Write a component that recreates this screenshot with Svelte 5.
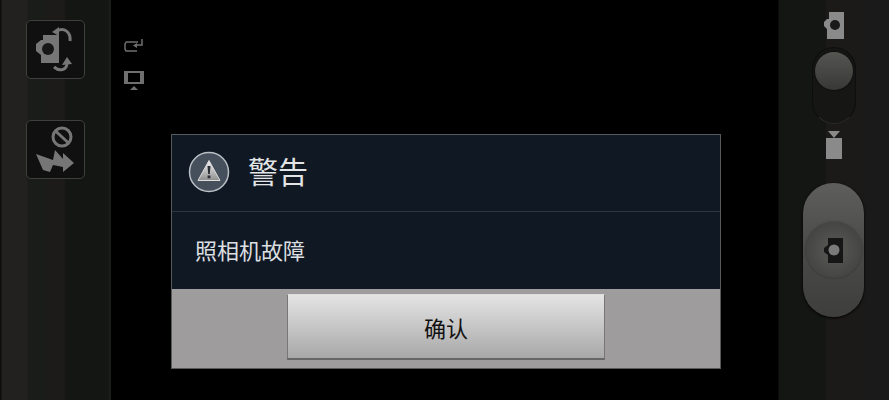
<script>
  const title = '警告';
  const message = '照相机故障';
  const confirmLabel = '确认';
</script>

<div class="screen">
  <aside class="rail left">
    <button class="tool" aria-label="switch camera">
      <svg width="57" height="57" viewBox="1 1 57 57">
        <path d="M17 15h16v28H15v-8l-5-4v-7l5-4h2z" fill="#767676" />
        <circle cx="22" cy="29" r="6" fill="#161716" />
        <path d="M31 11c7-4 14 1 13 10" fill="none" stroke="#767676" stroke-width="3" />
        <path d="M26 12l7-5v9z" fill="#767676" />
        <path d="M28 47c6 5 12 3 13-3" fill="none" stroke="#767676" stroke-width="3" />
        <path d="M36 45l5-8 5 7z" fill="#767676" />
      </svg>
    </button>
    <button class="tool" aria-label="flash off">
      <svg width="57" height="57" viewBox="1 1 57 57">
        <circle cx="36" cy="17" r="9" fill="none" stroke="#767676" stroke-width="3" />
        <path d="M29.500 11l13 12" stroke="#767676" stroke-width="3" />
        <path d="M10 34l17 6 2-10 8 9v-6l11 10-11 9v-5l-10-2-3 7-7-2z" fill="#767676" />
      </svg>
    </button>
  </aside>

  <main class="preview">
    <div class="status">
      <svg width="22" height="14" viewBox="0 0 22 14">
        <path d="M3 3h12M3 3l-1 2v5l1 2h11M19 0v6h-5" fill="none" stroke="#6f6f6f" stroke-width="1.500" />
        <path d="M14 4v5l-4-2.500z" fill="#6f6f6f" />
      </svg>
      <svg width="22" height="20" viewBox="0 0 22 20">
        <path fill-rule="evenodd" d="M1 0h20v13H1zM5 2v9h12V2z" fill="#6f6f6f" />
        <path d="M7 19l4-4 4 4z" fill="#6f6f6f" />
      </svg>
    </div>

    <div class="overlay">
      <div class="dialog">
        <header class="dialog-title">
          <span class="alert-icon">
            <svg width="42" height="42" viewBox="0 0 42 42">
              <defs>
                <linearGradient id="tri" x1="0" y1="0" x2="0" y2="1">
                  <stop offset="0" stop-color="#f2f2f2" />
                  <stop offset="1" stop-color="#8f8f8f" />
                </linearGradient>
              </defs>
              <circle cx="21" cy="21" r="19.500" fill="#45505c" stroke="#b9bfc4" stroke-width="1.500" />
              <path d="M21 9.500l11 20H10z" fill="url(#tri)" stroke="#ddd" stroke-linejoin="round" />
              <path d="M19.500 15h3l-.7 8h-1.600zM19.600 24.500h2.800v2.800h-2.800z" fill="#2a2f35" />
            </svg>
          </span>
          <h1>{title}</h1>
        </header>
        <p class="dialog-body">{message}</p>
        <footer class="dialog-actions">
          <button class="confirm">{confirmLabel}</button>
        </footer>
      </div>
    </div>
  </main>

  <aside class="rail right">
    <svg class="mode-icon" width="20" height="27" viewBox="0 0 20 27">
      <path d="M5 0h15v27H3V17L0 14v-4l3-3h2z" fill="#8a8a8a" />
      <circle cx="11" cy="13" r="5" fill="#191a19" />
    </svg>
    <div class="switch">
      <span class="knob"></span>
    </div>
    <svg class="mode-icon" width="16" height="28" viewBox="0 0 16 28">
      <path d="M2 0h12l-6 7z" fill="#8a8a8a" />
      <path d="M0 7h16v21H0z" fill="#8a8a8a" />
    </svg>
    <button class="shutter" aria-label="take picture">
      <span class="shutter-ring">
        <svg width="19" height="25" viewBox="0 0 19 25">
          <path d="M4 0h15v25H4v-8L0 14v-4l4-3z" fill="#161616" />
          <circle cx="10" cy="12" r="5.500" fill="#7a7a7a" />
        </svg>
      </span>
    </button>
  </aside>
</div>

<style>
  :global(body) {
    margin: 0;
    background: #000;
  }

  .screen {
    display: flex;
    width: 889px;
    height: 400px;
    overflow: hidden;
    background: #000;
    font-family: "Noto Sans CJK SC", "Liberation Sans", sans-serif;
  }

  .rail {
    flex: none;
    display: flex;
    flex-direction: column;
    align-items: center;
    width: 111px;
    box-sizing: border-box;
  }

  .left {
    gap: 41px;
    padding-top: 20px;
    background: linear-gradient(to right,
      #0c0c0c 0, #0c0c0c 1px,
      #232120 2px, #232120 27px,
      #191c19 28px, #191c19 46px,
      #1d1b19 47px, #1d1b19 64px,
      #141614 66px, #141614 108px,
      #191c19 109px, #191c19 111px);
  }

  .tool {
    display: flex;
    align-items: center;
    justify-content: center;
    width: 59px;
    height: 59px;
    padding: 0;
    border: 1px solid #3f403e;
    border-radius: 5px;
    background: #0f100f;
    box-sizing: border-box;
  }

  .preview {
    flex: 1;
    position: relative;
    min-width: 0;
  }

  .status {
    display: flex;
    flex-direction: column;
    align-items: flex-start;
    gap: 18px;
    padding: 39px 0 0 12px;
  }

  .overlay {
    position: absolute;
    inset: 0;
    padding: 134px 57px 0 60px;
  }

  .dialog {
    display: flex;
    flex-direction: column;
    height: 235px;
    box-sizing: border-box;
    border: 1px solid #565a5d;
    background: #101923;
  }

  .dialog-title {
    flex: none;
    display: flex;
    align-items: center;
    gap: 18px;
    height: 77px;
    box-sizing: border-box;
    padding: 0 0 2px 16px;
    border-bottom: 1px solid #2c3640;
  }

  .alert-icon {
    display: flex;
  }

  .dialog-title h1 {
    margin: 0 0 4px;
    font-size: 30px;
    font-weight: 400;
    color: #e2e4e6;
  }

  .dialog-body {
    flex: none;
    display: flex;
    align-items: center;
    height: 77px;
    box-sizing: border-box;
    margin: 0;
    padding: 0 0 3px 23px;
    font-size: 22px;
    color: #dcdfe1;
  }

  .dialog-actions {
    flex: 1;
    display: flex;
    justify-content: center;
    padding-top: 5px;
    background: #9e9c9d;
  }

  .confirm {
    align-self: flex-start;
    width: 318px;
    height: 66px;
    padding: 0;
    border: 1px solid #777;
    border-top-color: #ddd;
    border-bottom: 2px solid #666;
    background: linear-gradient(#e5e4e4, #a9a8a8);
    font-family: inherit;
    font-size: 22px;
    color: #111;
  }

  .right {
    padding-top: 12px;
    background: linear-gradient(to right,
      #0a0a0a 0,
      #141614 2px, #141614 47px,
      #1c1a18 49px, #1c1a18 84px,
      #1a1a1a 86px);
  }

  .mode-icon {
    flex: none;
  }

  .switch {
    width: 44px;
    height: 77px;
    margin-top: 8px;
    margin-bottom: 7px;
    box-sizing: border-box;
    padding: 4px 2px 0;
    border: 1px solid #0d0e0d;
    border-bottom-color: #2a2a28;
    border-radius: 22px;
    background: #161715;
  }

  .knob {
    display: block;
    width: 38px;
    height: 38px;
    border-radius: 50%;
    background: linear-gradient(#555552, #383836);
    box-shadow: 0 0 2px #000;
  }

  .shutter {
    display: flex;
    align-items: center;
    justify-content: center;
    width: 61px;
    height: 134px;
    margin-top: 24px;
    padding: 0;
    border: none;
    border-radius: 31px;
    background: linear-gradient(#5e5e5c, #4a4a48 50%, #3e3e3c);
    box-shadow: 0 1px 3px #000;
  }

  .shutter-ring {
    display: flex;
    align-items: center;
    justify-content: center;
    width: 56px;
    height: 56px;
    border-radius: 50%;
    background: radial-gradient(circle, #5a5a58 0, #454543 70%, #555553 100%);
    box-shadow: 0 0 2px #2a2a2a;
  }
</style>
